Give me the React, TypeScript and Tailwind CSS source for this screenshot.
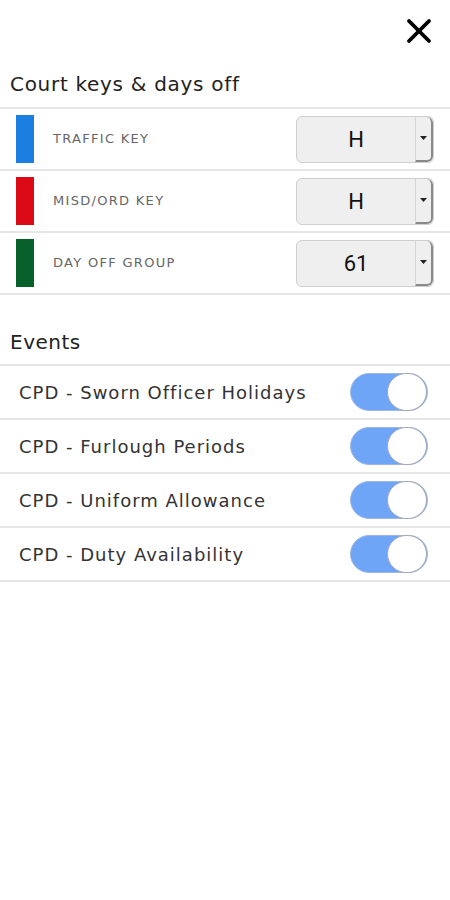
import { X } from 'lucide-react';

const keys = [
  { label: 'TRAFFIC KEY', value: 'H', color: 'bg-[#1a7fe0]' },
  { label: 'MISD/ORD KEY', value: 'H', color: 'bg-[#dc0a17]' },
  { label: 'DAY OFF GROUP', value: '61', color: 'bg-[#08612a]' },
];

const events = [
  'CPD - Sworn Officer Holidays',
  'CPD - Furlough Periods',
  'CPD - Uniform Allowance',
  'CPD - Duty Availability',
];

function Select({ value }: { value: string }) {
  return (
    <div className="flex h-[47px] w-[138px] overflow-hidden rounded-md border border-[#cfcfcf] bg-[#efefef]">
      <div className="flex flex-1 items-center justify-center font-['Roboto',sans-serif] text-[22px] text-[#111]">
        {value}
      </div>
      <div className="flex w-[18px] items-center justify-center border-l border-[#d4d4d4] border-r-2 border-b-2 border-r-[#8a8a8a] border-b-[#8a8a8a] rounded-r-md">
        <svg width="7" height="4" viewBox="0 0 7 4">
          <path d="M0 0h7L3.5 4z" fill="#222" />
        </svg>
      </div>
    </div>
  );
}

function Toggle() {
  return (
    <div className="flex h-[38px] w-[78px] items-center justify-end rounded-full border border-[#9db8e0] bg-[#6fa5f6]">
      <div className="h-[38px] w-[40px] rounded-full border border-[#a9a9b6] bg-white" />
    </div>
  );
}

export default function App() {
  return (
    <div className="min-h-[900px] w-[450px] bg-white font-['DejaVu_Sans',sans-serif]">
      <div className="flex h-[68px] items-start justify-end pr-[11px] pt-[11px]">
        <X size={40} strokeWidth={2.3} className="text-black" />
      </div>

      <div className="pl-[10px] pb-[7px] text-[20px] leading-[32px] tracking-[0.7px] text-[#222]">Court keys &amp; days off</div>
      <div className="border-t-2 border-[#e6e6e6]">
        {keys.map((k) => (
          <div key={k.label} className="flex h-[62px] items-center border-b-2 border-[#e6e6e6] pl-4 pr-4">
            <div className={`h-[48px] w-[18px] ${k.color}`} />
            <div className="ml-[19px] flex-1 text-[13px] tracking-[1.3px] text-[#666]">{k.label}</div>
            <Select value={k.value} />
          </div>
        ))}
      </div>

      <div className="pl-[10px] pt-[32px] pb-[7px] text-[20px] leading-[30px] tracking-[0.5px] text-[#222]">Events</div>
      <div className="border-t-2 border-[#e6e6e6]">
        {events.map((e) => (
          <div key={e} className="flex h-[54px] items-center border-b-2 border-[#e6e6e6] pl-[19px] pr-[22px]">
            <div className="flex-1 text-[18px] tracking-[1px] text-[#333]">{e}</div>
            <Toggle />
          </div>
        ))}
      </div>
    </div>
  );
}
